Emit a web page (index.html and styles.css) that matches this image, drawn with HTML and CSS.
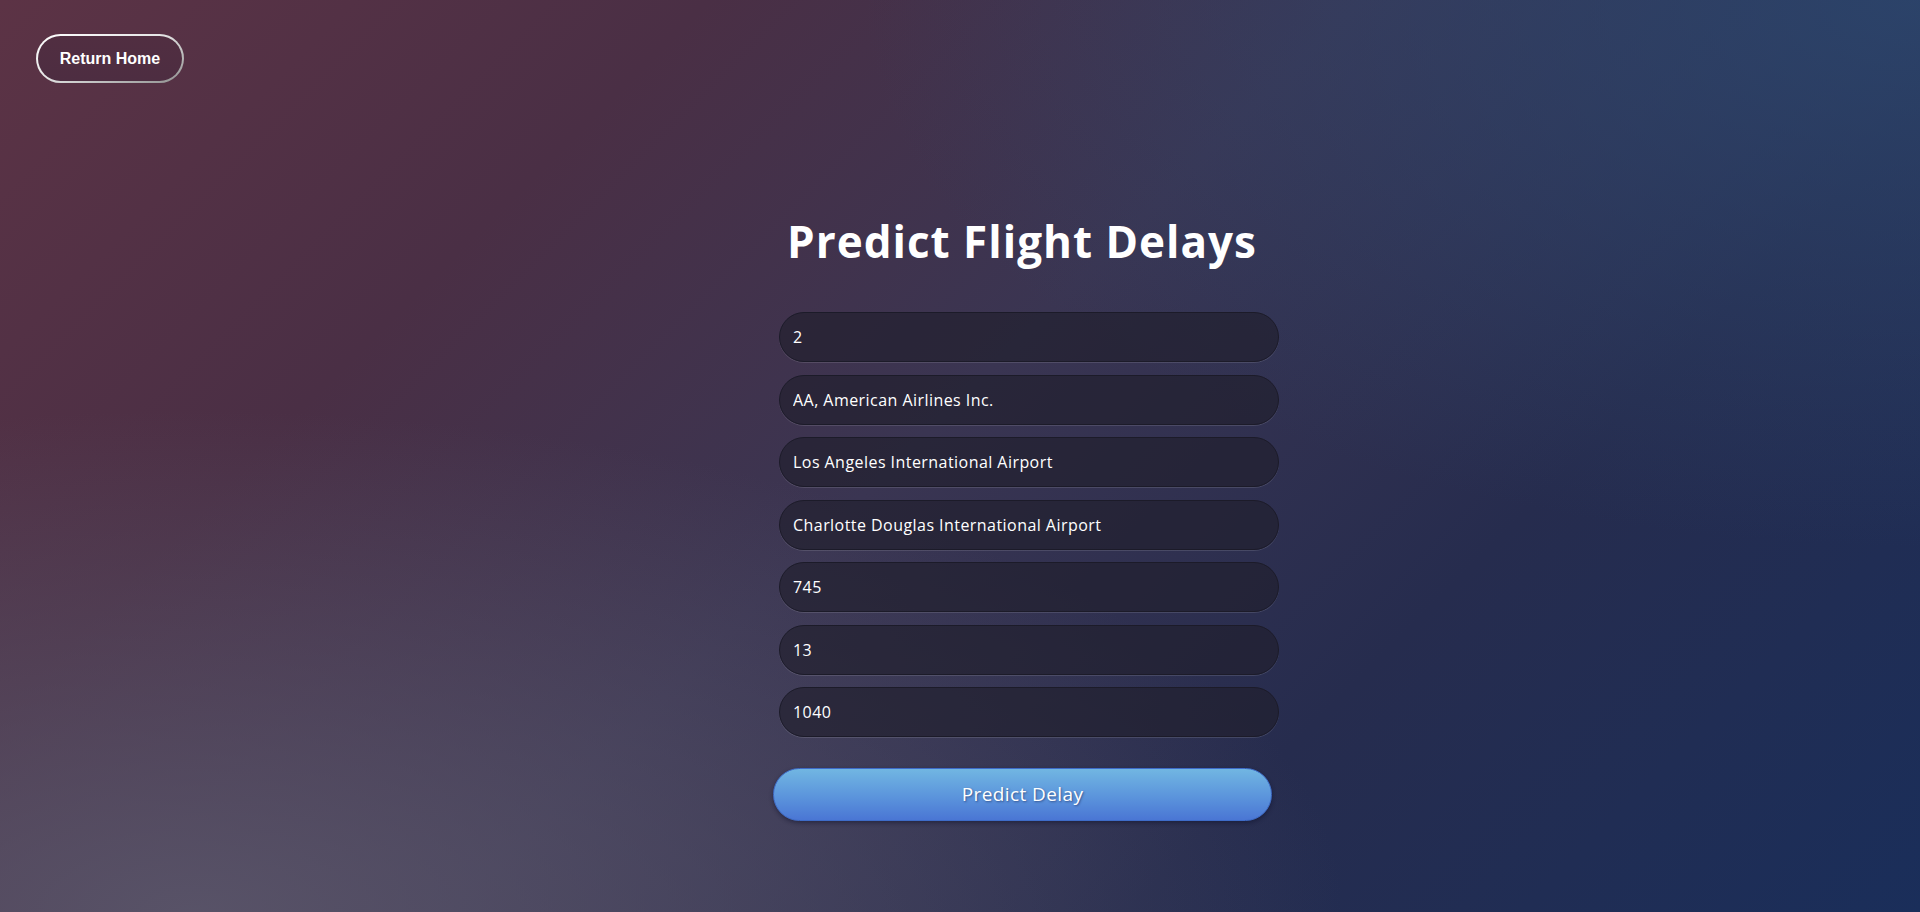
FILE: index.html
```html
<!DOCTYPE html>
<html lang="en">
<head>
<meta charset="utf-8">
<title>Predict Flight Delays</title>
<link rel="stylesheet" href="styles.css">
</head>
<body>
<header class="topbar">
  <a class="home-btn" href="#">Return Home</a>
</header>
<main class="main">
  <h1 class="title">Predict Flight Delays</h1>
  <form class="form">
    <input class="field" type="text" value="2">
    <input class="field" type="text" value="AA, American Airlines Inc.">
    <input class="field" type="text" value="Los Angeles International Airport">
    <input class="field" type="text" value="Charlotte Douglas International Airport">
    <input class="field" type="text" value="745">
    <input class="field" type="text" value="13">
    <input class="field" type="text" value="1040">
    <button class="submit" type="button">Predict Delay</button>
  </form>
</main>
</body>
</html>
```
FILE: styles.css
```css
html, body {
  margin: 0;
  padding: 0;
}
body {
  height: 912px;
  overflow: hidden;
  font-family: "Open Sans", "Noto Sans", sans-serif;
  color: #fff;
  background:
    radial-gradient(ellipse 60% 55% at 10% 100%, rgba(92, 88, 108, 0.85), rgba(92, 88, 108, 0) 100%),
    radial-gradient(ellipse 55% 60% at 100% 0%, rgba(44, 72, 112, 0.8), rgba(44, 72, 112, 0) 100%),
    linear-gradient(135deg, #5c3345 0%, #4a2f45 25%, #3a3552 48%, #262c4e 72%, #1a2e5a 100%);
}
.topbar {
  padding: 34px 36px 0;
  height: 49px;
}
.home-btn {
  display: inline-flex;
  align-items: center;
  justify-content: center;
  box-sizing: border-box;
  width: 148px;
  height: 49px;
  border: 2px solid transparent;
  border-radius: 25px;
  background:
    linear-gradient(#512e41, #4d2d41) padding-box,
    linear-gradient(160deg, #ffffff 0%, #e6e6e6 45%, #8f8f8f 100%) border-box;
  color: #fff;
  font-family: "Liberation Sans", Arial, sans-serif;
  font-weight: bold;
  font-size: 16px;
  text-decoration: none;
}
.main {
  display: flex;
  flex-direction: column;
  align-items: center;
  padding-left: 124px;
  padding-top: 130px;
}
.title {
  margin: 0 0 43px;
  font-size: 44px;
  font-weight: 700;
  line-height: 56px;
  letter-spacing: 1px;
}
.form {
  width: 500px;
  display: flex;
  flex-direction: column;
  align-items: flex-start;
  gap: 12.5px;
}
.field {
  box-sizing: border-box;
  width: 500px;
  height: 50px;
  margin-left: 7px;
  padding: 0 13px;
  border: 1px solid #1c1b29;
  border-radius: 25px;
  background: rgba(32, 30, 44, 0.66);
  box-shadow: 0 1px 0 rgba(255, 255, 255, 0.12);
  color: #fff;
  font-family: "Open Sans", "Noto Sans", sans-serif;
  font-size: 16px;
  font-weight: 500;
  letter-spacing: 0.45px;
  outline: none;
}
.submit {
  box-sizing: border-box;
  width: 499px;
  height: 53px;
  margin: 18.5px 0 0 1px;
  padding-bottom: 3px;
  border: 1px solid #3e6cc8;
  border-radius: 27px;
  background: linear-gradient(180deg, #71b6e2 0%, #5b94dc 55%, #4a76d4 100%);
  box-shadow: 0 2px 4px rgba(10, 14, 40, 0.45);
  color: #fff;
  font-family: "Open Sans", "Noto Sans", sans-serif;
  font-size: 19px;
  font-weight: 500;
  letter-spacing: 0.4px;
  text-shadow: 1px 1px 2px rgba(20, 30, 70, 0.5);
  cursor: pointer;
}
```
